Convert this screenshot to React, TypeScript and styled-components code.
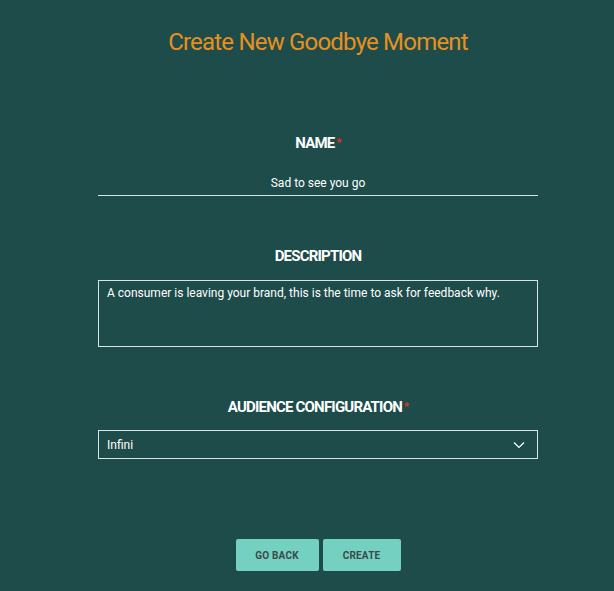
import styled, { createGlobalStyle } from "styled-components";

const Global = createGlobalStyle`
  html, body {
    margin: 0;
    padding: 0;
    background: #1d4c4a;
    font-family: Roboto, "Liberation Sans", sans-serif;
  }
`;

const Page = styled.div`
  width: 614px;
  height: 591px;
  box-sizing: border-box;
  padding: 28px 0 0 22px;
  background: #1d4c4a;
  display: flex;
  flex-direction: column;
  align-items: center;
`;

const Title = styled.h1`
  margin: 0;
  font-size: 24px;
  line-height: 28px;
  font-weight: 400;
  color: #e8901e;
  letter-spacing: -0.8px;
`;

const Form = styled.form`
  width: 440px;
  display: flex;
  flex-direction: column;
`;

const Field = styled.div<{ $top: number }>`
  margin-top: ${(p) => p.$top}px;
  display: flex;
  flex-direction: column;
  align-items: stretch;
`;

const Label = styled.label`
  align-self: center;
  font-size: 15px;
  line-height: 18px;
  font-weight: 700;
  color: #ffffff;
  letter-spacing: -0.8px;
  text-transform: uppercase;
`;

const Star = styled.span`
  color: #e0352b;
  font-size: 11px;
  vertical-align: top;
  margin-left: 2px;
`;

const LineInput = styled.input`
  margin-top: 20px;
  height: 21px;
  border: 0;
  border-bottom: 1px solid #d9e4e3;
  background: transparent;
  color: #fff;
  text-align: center;
  font-family: Roboto, sans-serif;
  font-size: 12px;
  padding: 0 0 2px;
  outline: none;
`;

const Area = styled.textarea`
  margin-top: 15px;
  height: 67px;
  box-sizing: border-box;
  border: 1px solid #d9e4e3;
  background: transparent;
  color: #fff;
  font-family: Roboto, sans-serif;
  font-size: 12px;
  line-height: 16px;
  padding: 4px 8px;
  resize: none;
  outline: none;
`;

const Select = styled.div`
  margin-top: 14px;
  height: 29px;
  box-sizing: border-box;
  border: 1px solid #d9e4e3;
  display: flex;
  align-items: center;
  justify-content: space-between;
  padding: 0 12px 0 8px;
  color: #fff;
  font-size: 12px;
`;

const Actions = styled.div`
  margin-top: 80px;
  display: flex;
  gap: 4px;
`;

const Button = styled.button<{ $w: number }>`
  width: ${(p) => p.$w}px;
  height: 32px;
  border: 0;
  border-radius: 2px;
  background: #74d1c2;
  color: #3b4a49;
  font-family: Roboto, sans-serif;
  font-weight: 700;
  font-size: 10px;
  letter-spacing: 0.2px;
  cursor: pointer;
`;

export default function App() {
  return (
    <>
      <Global />
      <Page>
        <Title>Create New Goodbye Moment</Title>
        <Form onSubmit={(e) => e.preventDefault()}>
          <Field $top={78}>
            <Label>
              Name<Star>*</Star>
            </Label>
            <LineInput defaultValue="Sad to see you go" />
          </Field>
          <Field $top={51}>
            <Label>Description</Label>
            <Area defaultValue="A consumer is leaving your brand, this is the time to ask for feedback why." />
          </Field>
          <Field $top={51}>
            <Label>
              Audience Configuration<Star>*</Star>
            </Label>
            <Select>
              <span>Infini</span>
              <svg width="12" height="8" viewBox="0 0 12 8" fill="none">
                <path d="M1 1.5 L6 6.5 L11 1.5" stroke="#ffffff" strokeWidth="1.2" />
              </svg>
            </Select>
          </Field>
        </Form>
        <Actions>
          <Button $w={83} type="button">GO BACK</Button>
          <Button $w={78} type="submit">CREATE</Button>
        </Actions>
      </Page>
    </>
  );
}
